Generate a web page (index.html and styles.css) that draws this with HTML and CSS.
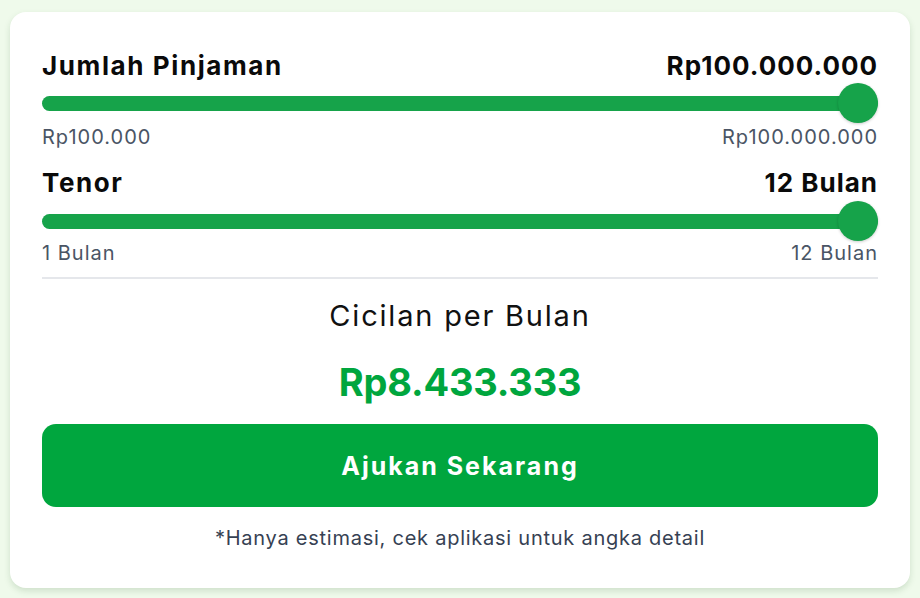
FILE: index.html
```html
<!DOCTYPE html>
<html lang="id">
<head>
    <meta charset="UTF-8">
    <title>Simulasi Pinjaman</title>
    <link rel="stylesheet" href="styles.css">
</head>
<body>
    <div class="card">
        <div class="field">
            <div class="field-head">
                <span>Jumlah Pinjaman</span>
                <span>Rp100.000.000</span>
            </div>
            <div class="track">
                <div class="fill" style="width: 100%"></div>
                <div class="thumb" style="left: 100%"></div>
            </div>
            <div class="range-label">
                <span>Rp100.000</span>
                <span>Rp100.000.000</span>
            </div>
        </div>

        <div class="field tenor">
            <div class="field-head">
                <span>Tenor</span>
                <span>12 Bulan</span>
            </div>
            <div class="track">
                <div class="fill" style="width: 100%"></div>
                <div class="thumb" style="left: 100%"></div>
            </div>
            <div class="range-label">
                <span>1 Bulan</span>
                <span>12 Bulan</span>
            </div>
        </div>

        <div class="result">
            <p class="result-title">Cicilan per Bulan</p>
            <p class="result-amount">Rp8.433.333</p>
        </div>

        <button class="btn-apply">Ajukan Sekarang</button>
        <p class="note">*Hanya estimasi, cek aplikasi untuk angka detail</p>
    </div>
</body>
</html>
```

FILE: styles.css
```css
* {
    box-sizing: border-box;
}
body {
    margin: 0;
    background: #effaeb;
    font-family: "Inter", "Liberation Sans", sans-serif;
    color: #111;
}
.card {
    margin: 12px 10px;
    padding: 38px 32px 38px;
    background: #fff;
    border-radius: 16px;
    box-shadow: 0 3px 6px rgba(60, 110, 60, 0.18);
}
.field-head {
    display: flex;
    justify-content: space-between;
    font-size: 26px;
    line-height: 32px;
    font-weight: 700;
    letter-spacing: 1px;
    color: #0a0a0a;
}
.field-head span:first-child {
    letter-spacing: 1.6px;
}
.tenor {
    margin-top: 18px;
}
.track {
    position: relative;
    height: 15px;
    margin-top: 14px;
    border-radius: 8px;
    background: #e5e7eb;
}
.tenor .track {
    margin-top: 15px;
}
.fill {
    height: 100%;
    border-radius: 8px;
    background: #16a34a;
}
.thumb {
    position: absolute;
    top: 50%;
    width: 40px;
    height: 40px;
    margin: -21px 0 0 -40px;
    border-radius: 50%;
    background: #16a34a;
    box-shadow: 0 1px 3px rgba(0, 0, 0, 0.2);
}
.range-label {
    display: flex;
    justify-content: space-between;
    margin-top: 14px;
    font-size: 20px;
    line-height: 24px;
    letter-spacing: 1px;
    color: #4a5565;
}
.tenor .range-label {
    margin-top: 12px;
}
.result {
    margin-top: 12px;
    padding-top: 19px;
    border-top: 2px solid #e5e7eb;
    text-align: center;
}
.result p {
    margin: 0;
}
.result-title {
    font-size: 29px;
    line-height: 36px;
    letter-spacing: 1.8px;
    color: #111;
}
.result-amount {
    margin-top: 26px !important;
    font-size: 38px;
    line-height: 44px;
    font-weight: 700;
    letter-spacing: -0.2px;
    color: #00a63e;
}
.btn-apply {
    display: block;
    width: 100%;
    height: 83px;
    margin-top: 20px;
    border: none;
    border-radius: 14px;
    background: #00a63e;
    color: #fff;
    font-family: inherit;
    font-size: 25px;
    font-weight: 700;
    letter-spacing: 2px;
}
.note {
    margin: 19px 0 0;
    text-align: center;
    font-size: 20px;
    line-height: 24px;
    letter-spacing: 0.75px;
    color: #364153;
}
```
